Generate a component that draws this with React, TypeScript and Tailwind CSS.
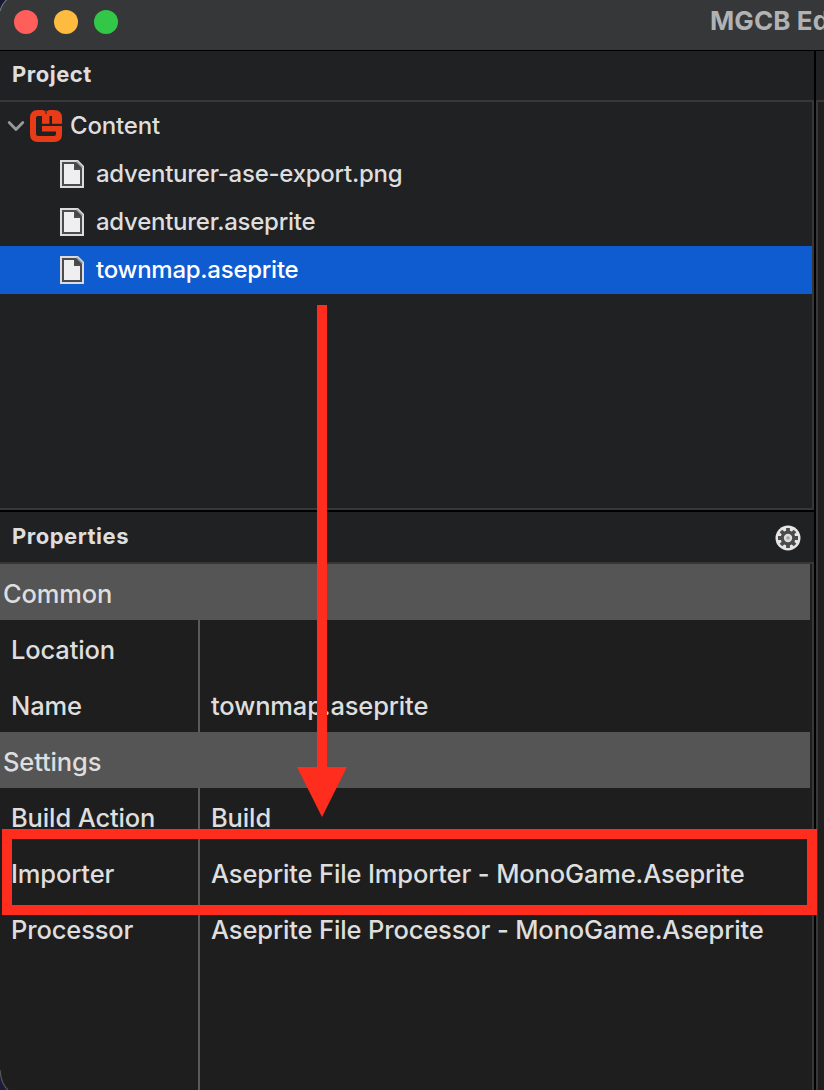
import type { ReactNode } from 'react';

function FileIcon() {
  return (
    <svg width="24" height="28" viewBox="0 0 24 28" className="shrink-0">
      <path d="M0 0H18L24 6V28H0Z" fill="#dcdcde" />
      <path d="M2 2H16.5L22 7.5V26H2Z" fill="#4c4c4e" />
      <path d="M4 4H14V10H20V24H4Z" fill="#efeff2" />
      <path d="M16 2L22 8H16Z" fill="#454547" />
      <path d="M16.5 1.5L22.5 7.5" stroke="#9a9a9c" strokeWidth="1.6" />
    </svg>
  );
}

function LogoIcon() {
  return (
    <svg width="32" height="32" viewBox="0 0 32 32" className="shrink-0">
      <path d="M8 0H13L16 1.8L19 0H24Q32 0 32 8V24Q32 32 24 32H8Q0 32 0 24V8Q0 0 8 0Z" fill="#e73c17" />
      <path d="M8 6H12V21.5H26V24Q26 26 24 26H8.5Q6 26 6 23.5V8Q6 6 8 6Z" fill="#202123" />
      <path d="M12 13.8H32V16H12Z" fill="#202123" />
      <path d="M15 0.5H17V4H15Z" fill="#8b2c18" />
      <path d="M19.5 6H22V14H19.5Z" fill="#202123" />
    </svg>
  );
}

function GearIcon() {
  return (
    <svg width="26" height="26" viewBox="0 0 26 26">
      <circle cx="13" cy="13" r="12.5" fill="#e6e6e6" />
      <circle cx="13" cy="13" r="7.4" fill="#4b4b4b" />
      <g stroke="#4b4b4b" strokeWidth="3.8">
        <path d="M13 3V23M3 13H23M6 6L20 20M20 6L6 20" />
      </g>
      <circle cx="13" cy="13" r="4.2" fill="#dedede" />
      <circle cx="13" cy="13" r="1.8" fill="#a4a4a4" />
    </svg>
  );
}

function TreeItem({ selected, children }: { selected?: boolean; children: ReactNode }) {
  return (
    <div className={selected ? 'flex h-12 items-center gap-3 bg-[#0f5bd0] pl-[60px] text-white' : 'flex h-12 items-center gap-3 pl-[60px]'}>
      <FileIcon />
      {children}
    </div>
  );
}

function Section({ children }: { children: ReactNode }) {
  return <div className="mr-[2px] flex h-14 items-center bg-[#555555] pl-[3px] pt-[5px]">{children}</div>;
}

function Row({ label, children }: { label: string; children?: ReactNode }) {
  return (
    <div className="flex h-14">
      <div className="flex w-[200px] shrink-0 items-center border-r-2 border-[#5a5a5a] pl-[11px] pt-[5px]">{label}</div>
      <div className="flex items-center pl-[11px] pt-[5px]">{children}</div>
    </div>
  );
}

export default function App() {
  return (
    <div className="relative flex h-[1090px] w-[824px] flex-col overflow-hidden whitespace-nowrap bg-[#1e1e1e] font-['Inter',sans-serif] text-[#dedede]">
      <header className="flex h-[51px] shrink-0 border-b border-black bg-[#363739]">
        <div className="flex gap-4 pl-[14px] pt-[10px]">
          <span className="size-6 rounded-full bg-[#ff5f5b]" />
          <span className="size-6 rounded-full bg-[#fdbb40]" />
          <span className="size-6 rounded-full bg-[#33c748]" />
        </div>
        <h1 className="ml-[592px] mt-[5px] text-[26px] font-bold leading-8 tracking-[0.1px] text-[#b1b2b4]">MGCB Editor</h1>
      </header>
      <main className="flex min-h-0 flex-1">
        <div className="flex w-[814px] shrink-0 flex-col">
          <section className="flex h-[459px] shrink-0 flex-col bg-[#202123]">
            <h2 className="h-[49px] shrink-0 pl-3 pt-[7px] text-[22px] font-bold leading-8 tracking-[0.5px]">Project</h2>
            <div className="flex-1 border-y-2 border-r-2 border-[#373737] text-[24px] font-[450] tracking-[-0.26px]">
              <div className="flex h-12 items-center">
                <svg width="18" height="12" viewBox="0 0 18 12" className="ml-[7px] mr-[5px]">
                  <path d="M2.2 2.5L9 9.5L15.8 2.5" fill="none" stroke="#98999a" strokeWidth="2.8" strokeLinecap="round" strokeLinejoin="round" />
                </svg>
                <LogoIcon />
                <span className="ml-2 tracking-[-0.15px]">Content</span>
              </div>
              <TreeItem>adventurer-ase-export.png</TreeItem>
              <TreeItem>adventurer.aseprite</TreeItem>
              <TreeItem selected>townmap.aseprite</TreeItem>
            </div>
          </section>
          <section className="flex min-h-0 flex-1 flex-col border-t-2 border-black">
            <div className="flex h-[50px] shrink-0 justify-between bg-[#202123] pl-3 pr-[13px]">
              <h2 className="pt-2 text-[22px] font-bold leading-8 tracking-[0.5px]">Properties</h2>
              <div className="pt-[13px]"><GearIcon /></div>
            </div>
            <div className="flex flex-1 flex-col border-r-2 border-t-2 border-[#373737] text-[25.5px] font-[450] tracking-[-0.14px]">
              <Section>Common</Section>
              <Row label="Location" />
              <Row label="Name">townmap.aseprite</Row>
              <Section>Settings</Section>
              <Row label="Build Action">Build</Row>
              <Row label="Importer">Aseprite File Importer - MonoGame.Aseprite</Row>
              <Row label="Processor">Aseprite File Processor - MonoGame.Aseprite</Row>
              <div className="w-[200px] flex-1 border-r-2 border-[#5a5a5a]" />
            </div>
          </section>
        </div>
        <aside className="flex flex-1 flex-col border-l-2 border-black">
          <div className="h-[49px] bg-[#202123]" />
          <div className="flex-1 border-l-2 border-t-2 border-[#373737]" />
        </aside>
      </main>
      <svg width="50" height="512" viewBox="0 0 50 512" className="absolute left-[297px] top-[305px]">
        <path d="M20 0H30V462H50L25 512L0 462H20Z" fill="#ff2d1d" />
      </svg>
      <div className="absolute left-[2px] top-[829px] h-[86px] w-[815px] border-[10px] border-[#ff2d1d]" />
      <svg width="8" height="12" viewBox="0 0 8 12" className="absolute left-0 top-0">
        <path d="M0 0H6Q2 4 0 10Z" fill="#171a35" />
        <path d="M6.5 0Q2 4 0 11" fill="none" stroke="#707176" strokeWidth="1.2" />
      </svg>
      <svg width="10" height="22" viewBox="0 0 10 22" className="absolute bottom-0 left-0">
        <path d="M0 6Q2 16 8 22H0Z" fill="#1c1b38" />
        <path d="M0 2Q1 16 8 22" fill="none" stroke="#55565a" strokeWidth="1.2" />
      </svg>
    </div>
  );
}
